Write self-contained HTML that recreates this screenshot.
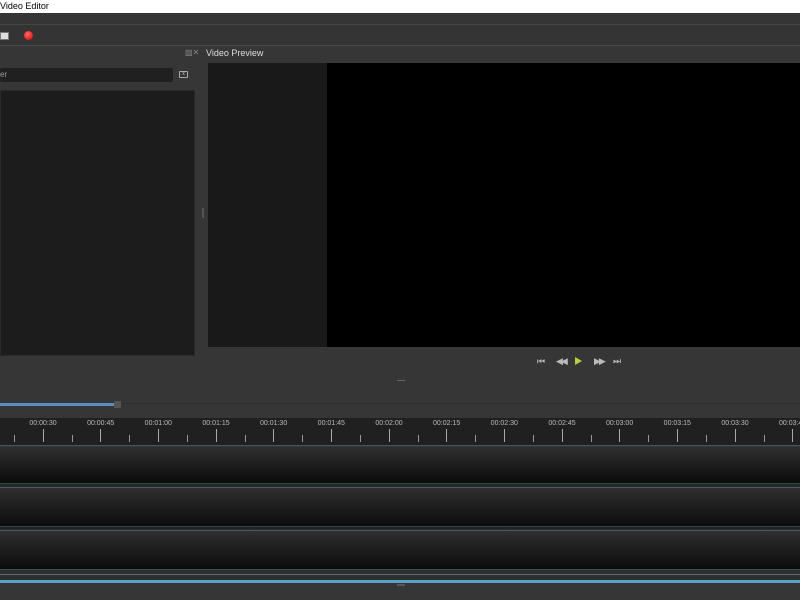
<!DOCTYPE html>
<html><head><meta charset="utf-8"><style>
*{margin:0;padding:0;box-sizing:border-box}
body{width:800px;height:600px;overflow:hidden;background:#363636;font-family:"Liberation Sans",sans-serif;position:relative}
.a{position:absolute}
.lbl{position:absolute;top:420px;font-size:7px;color:#bbb;transform:translateX(-50%)}
.mj{position:absolute;top:429px;width:1px;height:13px;background:#aaa}
.mn{position:absolute;top:435px;width:1px;height:7px;background:#999}
.trk{position:absolute;left:0;width:800px;background:linear-gradient(#2f2f2f,#0c0c0c)}
.ic{position:absolute;top:356px;color:#bbb;font-size:9px;letter-spacing:-2px}
</style></head><body>
<div class="a" style="left:0;top:0;width:800px;height:13px;background:#fff;font-size:9px;color:#000;line-height:13px">Video Editor</div>
<div class="a" style="left:0;top:13px;width:800px;height:12px;background:#353535;border-bottom:1px solid #444"></div>
<div class="a" style="left:0;top:25px;width:800px;height:21px;background:#343434;border-bottom:1px solid #4a4a4a"></div>
<div class="a" style="left:0;top:32px;width:9px;height:8px;background:#ddd;border:1px solid #777"></div>
<div class="a" style="left:24px;top:31px;width:9px;height:9px;border-radius:50%;background:radial-gradient(circle at 40% 35%,#f66,#c00)"></div>
<div class="a" style="left:185px;top:48px;font-size:8px;color:#888">▧✕</div>
<div class="a" style="left:206px;top:48px;font-size:9px;color:#ddd">Video Preview</div>
<div class="a" style="left:0;top:68px;width:173px;height:14px;background:#202020;border-radius:2px;font-size:8px;color:#999;line-height:14px">er</div>
<div class="a" style="left:179px;top:71px;width:9px;height:7px;border:1px solid #aaa;border-radius:1px;font-size:5px;color:#ccc;line-height:5px;text-align:center">x</div>
<div class="a" style="left:0;top:90px;width:195px;height:266px;background:#1c1c1c;border:1px solid #2a2a2a"></div>
<div class="a" style="left:202px;top:208px;width:2px;height:10px;background:#555"></div>
<div class="a" style="left:208px;top:63px;width:119px;height:284px;background:#191919"></div>
<div class="a" style="left:327px;top:63px;width:473px;height:284px;background:#000"></div>
<div class="ic" style="left:537px">⏮</div>
<div class="ic" style="left:556px">◀◀</div>
<div class="a" style="left:575px;top:357px;width:0;height:0;border-left:7px solid #b8d040;border-top:4px solid transparent;border-bottom:4px solid transparent"></div>
<div class="ic" style="left:594px">▶▶</div>
<div class="ic" style="left:613px">⏭</div>
<div class="a" style="left:397px;top:380px;width:8px;height:1px;background:#666"></div>
<div class="a" style="left:0;top:403px;width:800px;height:1px;background:#2e2e2e"></div>
<div class="a" style="left:0;top:403px;width:116px;height:3px;background:#5a8cc0"></div>
<div class="a" style="left:114px;top:401px;width:7px;height:7px;background:#555;border-radius:1px"></div>
<div class="a" style="left:0;top:418px;width:800px;height:28px;background:#202020"></div>
<div class="a" style="left:0;top:445px;width:800px;height:1px;background:#3e5a5a"></div>
<div class="lbl" style="left:43px">00:00:30</div><div class="lbl" style="left:100.7px">00:00:45</div><div class="lbl" style="left:158.3px">00:01:00</div><div class="lbl" style="left:216px">00:01:15</div><div class="lbl" style="left:273.6px">00:01:30</div><div class="lbl" style="left:331.3px">00:01:45</div><div class="lbl" style="left:389px">00:02:00</div><div class="lbl" style="left:446.6px">00:02:15</div><div class="lbl" style="left:504.3px">00:02:30</div><div class="lbl" style="left:562px">00:02:45</div><div class="lbl" style="left:619.6px">00:03:00</div><div class="lbl" style="left:677.3px">00:03:15</div><div class="lbl" style="left:735px">00:03:30</div><div class="lbl" style="left:792.6px">00:03:45</div>
<div class="mj" style="left:43px"></div><div class="mj" style="left:100px"></div><div class="mj" style="left:158px"></div><div class="mj" style="left:216px"></div><div class="mj" style="left:273px"></div><div class="mj" style="left:331px"></div><div class="mj" style="left:389px"></div><div class="mj" style="left:446px"></div><div class="mj" style="left:504px"></div><div class="mj" style="left:562px"></div><div class="mj" style="left:619px"></div><div class="mj" style="left:677px"></div><div class="mj" style="left:735px"></div><div class="mj" style="left:792px"></div>
<div class="mn" style="left:14px"></div><div class="mn" style="left:72px"></div><div class="mn" style="left:129px"></div><div class="mn" style="left:187px"></div><div class="mn" style="left:245px"></div><div class="mn" style="left:302px"></div><div class="mn" style="left:360px"></div><div class="mn" style="left:418px"></div><div class="mn" style="left:475px"></div><div class="mn" style="left:533px"></div><div class="mn" style="left:591px"></div><div class="mn" style="left:648px"></div><div class="mn" style="left:706px"></div><div class="mn" style="left:764px"></div>
<div class="trk" style="top:447px;height:36px"></div>
<div class="a" style="left:0;top:483px;width:800px;height:5px;background:#1e2a2a;border-top:1px solid #2f4444;border-bottom:1px solid #556"></div>
<div class="trk" style="top:488px;height:38px"></div>
<div class="a" style="left:0;top:526px;width:800px;height:5px;background:#1e2a2a;border-top:1px solid #2f4444;border-bottom:1px solid #556"></div>
<div class="trk" style="top:531px;height:38px"></div>
<div class="a" style="left:0;top:569px;width:800px;height:12px;background:#2a3030;border-top:1px solid #3a5050"></div>
<div class="a" style="left:0;top:574px;width:800px;height:1px;background:#667"></div>
<div class="a" style="left:0;top:580px;width:800px;height:3px;background:#5aa0c0"></div>
<div class="a" style="left:397px;top:584px;width:8px;height:2px;background:#556"></div>
</body></html>
